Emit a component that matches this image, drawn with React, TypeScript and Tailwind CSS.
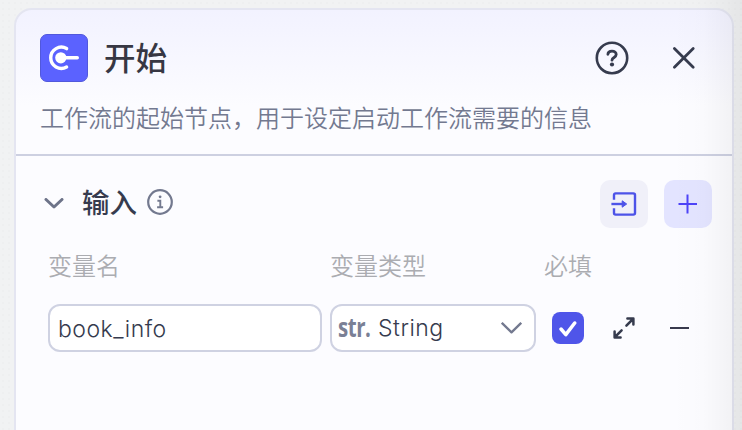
import type { ReactNode } from "react";

function StartLogo() {
  return (
    <div className="h-12 w-12 shrink-0 rounded-[7px] border border-[#5158dc] bg-[#5b62ff]">
      <svg className="-ml-px -mt-px block h-12 w-12" viewBox="0 0 48 48" fill="none" stroke="#fff" strokeLinecap="round">
        <path d="M26.6 14.6 A10.6 10.6 0 1 0 26.6 33" strokeWidth="3.4" />
        <circle cx="20.8" cy="23.8" r="5.6" fill="#fff" stroke="none" />
        <path d="M21 23.8 H37.3" strokeWidth="3.4" />
      </svg>
    </div>
  );
}

function HelpIcon() {
  return (
    <svg className="block h-9 w-9" viewBox="0 0 36 36" fill="none" stroke="#363b4e" strokeLinecap="round" strokeLinejoin="round">
      <circle cx="18" cy="18" r="15.2" strokeWidth="2.6" />
      <path d="M13.9 14.3 C14 12.2 15.6 11.1 18 11.1 C20.5 11.1 22.2 12.6 22.2 14.6 C22.2 17.5 18 17.4 18 20.2" strokeWidth="2.8" />
      <circle cx="18" cy="24.5" r="2.1" fill="#363b4e" stroke="none" />
    </svg>
  );
}

function CloseIcon() {
  return (
    <svg className="block h-6 w-6" viewBox="0 0 24 24" fill="none" stroke="#363b4e" strokeWidth="2.8" strokeLinecap="round">
      <path d="M2.4 2.4 L21.2 21.2 M21.2 2.4 L2.4 21.2" />
    </svg>
  );
}

function InfoIcon() {
  return (
    <svg className="block h-[26px] w-[26px]" viewBox="0 0 26 26" fill="none" stroke="#73798f">
      <circle cx="13" cy="13" r="11.8" strokeWidth="2.2" />
      <circle cx="13.1" cy="7.8" r="1.4" fill="#73798f" stroke="none" />
      <path d="M10.4 11.7 H13.3 V18.3 M10.1 18.3 H16.1" strokeWidth="1.9" />
    </svg>
  );
}

function ImportIcon() {
  return (
    <svg className="mr-px block h-6 w-[26px]" viewBox="0 0 26 24" fill="none" stroke="#4d53e8" strokeWidth="2.4">
      <path d="M3 7.8 V3 Q3 1.4 4.6 1.4 H22.3 Q24 1.4 24 3 V21 Q24 22.6 22.3 22.6 H4.6 Q3 22.6 3 21 V16.2" />
      <path d="M.4 12 H12" />
      <path d="M11.2 8.8 L15.7 12 L11.2 15.2 Z" fill="#4d53e8" strokeWidth="1" strokeLinejoin="round" />
    </svg>
  );
}

function ExpandIcon() {
  return (
    <svg className="block h-6 w-6" viewBox="0 0 24 24" fill="none" stroke="#363b4e" strokeWidth="2.5" strokeLinecap="round" strokeLinejoin="round">
      <path d="M14.4 9.6 L21 3 M15.4 2.6 H21.4 V8.6" />
      <path d="M9.6 14.4 L3 21 M2.6 15.4 V21.4 H8.6" />
    </svg>
  );
}

function Label({ className, children }: { className: string; children: ReactNode }) {
  return <div className={`shrink-0 ${className}`}>{children}</div>;
}

export default function App() {
  return (
    <div className="relative h-[430px] w-[742px] overflow-hidden bg-[#f1f2f3] bg-[radial-gradient(#eeeff0_1px,transparent_1px)] bg-[size:6px_6px] pl-[14px] pt-2 font-['Inter','Noto_Sans_CJK_SC',sans-serif]">
      <main className="h-[460px] w-[720px] rounded-[18px] border-2 border-[#e4e5f1] bg-[#fcfcff] bg-[linear-gradient(#f2f2ff_0px,#fcfcff_96px)]">
        <header className="h-[146px] border-b-2 border-[#cdd0e1] pl-6">
          <div className="flex h-[96px] items-center">
            <StartLogo />
            <h1 className="ml-4 mt-[2px] text-[31.5px] font-medium leading-none text-[#373743]">开始</h1>
            <button className="ml-auto mr-[42px]" aria-label="帮助"><HelpIcon /></button>
            <button className="mr-[36px]" aria-label="关闭"><CloseIcon /></button>
          </div>
          <p className="-mt-[5px] whitespace-nowrap text-[24px] leading-9 font-[350] text-[#737990]">工作流的起始节点，用于设定启动工作流需要的信息</p>
        </header>

        <section>
          <div className="mt-6 flex h-12 items-center pl-[28px] pr-5">
            <svg className="h-3 w-5" viewBox="0 0 20 12" fill="none" stroke="#6d7389" strokeWidth="3" strokeLinecap="round" strokeLinejoin="round">
              <path d="M2 1.5 L10 9 L18 1.5" />
            </svg>
            <h2 className="ml-[18px] mr-[10px] text-[27.5px] font-medium leading-none text-[#363b4e]">输入</h2>
            <div className="mb-1"><InfoIcon /></div>
            <button className="ml-auto flex h-12 w-12 items-center justify-center rounded-[10px] bg-[#f0f0f9]" aria-label="导入"><ImportIcon /></button>
            <button className="ml-4 flex h-12 w-12 items-center justify-center rounded-[10px] bg-[#e3e4ff]" aria-label="添加">
              <svg className="mr-px h-5 w-5" viewBox="0 0 20 20" stroke="#4d43f8" strokeWidth="2"><path d="M9.5 .5 V19.5 M.5 10 H19" /></svg>
            </button>
          </div>

          <div className="mt-[21px] flex h-9 items-center pl-8 text-[24px] leading-9 font-[350] text-[#abacb1]">
            <Label className="w-[282px]">变量名</Label>
            <Label className="w-[214px]">变量类型</Label>
            <Label className="w-[60px]">必填</Label>
          </div>

          <div className="mt-[19px] flex h-12 items-center pl-8 text-[23px] text-[#363b4e]">
            <div className="flex h-12 w-[274px] items-center rounded-xl border-2 border-[#cfd2e2] bg-white pl-2 pt-[2px] font-[330] tracking-[0.5px]">book_info</div>
            <div className="ml-2 flex h-12 w-[206px] items-center rounded-xl border-2 border-[#cfd2e2] bg-white pl-[6px] pr-[12px]">
              <span className="w-10 shrink-0">
                <span className="inline-block origin-left scale-x-[.76] font-['Open_Sans',sans-serif] text-[27px] leading-9 font-bold tracking-[-0.6px] text-[#7a8095]">str.</span>
              </span>
              <span className="font-[330] tracking-[0.5px]">String</span>
              <svg className="ml-auto h-3 w-[21px]" viewBox="0 0 21 12" fill="none" stroke="#73798f" strokeWidth="2.3" strokeLinejoin="round">
                <path d="M.8 .8 L10.5 10.4 L20.2 .8" />
              </svg>
            </div>
            <div className="ml-4 flex h-8 w-8 items-center justify-center rounded-lg bg-[#4f55e9]">
              <svg className="mr-px mt-px h-4 w-[18px]" viewBox="0 0 18 16" fill="none" stroke="#fff" strokeWidth="3.5" strokeLinecap="round" strokeLinejoin="round"><path d="M2 8 L6.8 13.6 L15.7 2" /></svg>
            </div>
            <button className="ml-[28px]" aria-label="展开"><ExpandIcon /></button>
            <button className="ml-[34px] h-0.5 w-[19px] bg-[#38394d]" aria-label="移除" />
          </div>
        </section>
      </main>
      <div className="pointer-events-none absolute inset-y-0 right-0 w-[72px] bg-[linear-gradient(90deg,transparent,rgba(0,0,0,.008)_45%,rgba(0,0,0,.05))]" />
    </div>
  );
}
